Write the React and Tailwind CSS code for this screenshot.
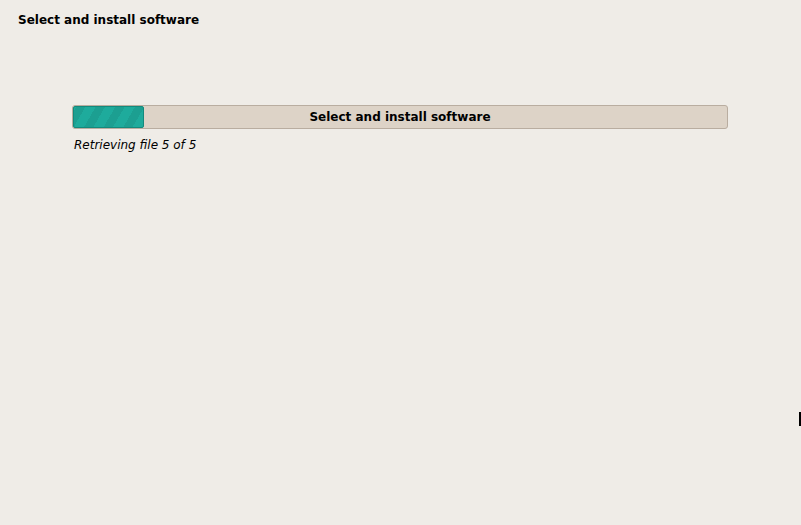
import React from 'react';

const ProgressBar = ({ label, percent }) => (
    <div className="relative h-[24px] w-[656px] rounded-[3px] border border-[#b9ada0] bg-[#ddd3c7]">
        <div
            className="absolute left-0 top-0 h-full rounded-[2px] border border-[#138a7d] bg-[#1eab9c]"
            style={{
                width: `${percent}%`,
                backgroundImage:
                    'repeating-linear-gradient(-60deg, rgba(0,0,0,0) 0px, rgba(0,0,0,0) 9px, rgba(0,0,0,0.07) 9px, rgba(0,0,0,0.07) 17px)',
            }}
        />
        <div className="relative flex h-full items-center justify-center text-[12px] font-bold text-black">
            {label}
        </div>
    </div>
);

const App = () => {
    return (
        <div className="relative h-[525px] w-[801px] overflow-hidden bg-[#efece7] font-['DejaVu_Sans',sans-serif] text-black">
            {/* Header */}
            <h1 className="px-[18px] pt-[12px] text-[12px] font-bold leading-[16px]">Select and install software</h1>

            {/* Progress */}
            <div className="pl-[72px] pt-[77px]">
                <ProgressBar label="Select and install software" percent={10.8} />
                <p className="mt-[8px] pl-[2px] text-[12px] italic leading-[16px]">Retrieving file 5 of 5</p>
            </div>

            {/* mouse pointer edge */}
            <div className="absolute right-0 top-[412px] h-[14px] w-[2px] bg-black" />
        </div>
    );
};

export default App;
